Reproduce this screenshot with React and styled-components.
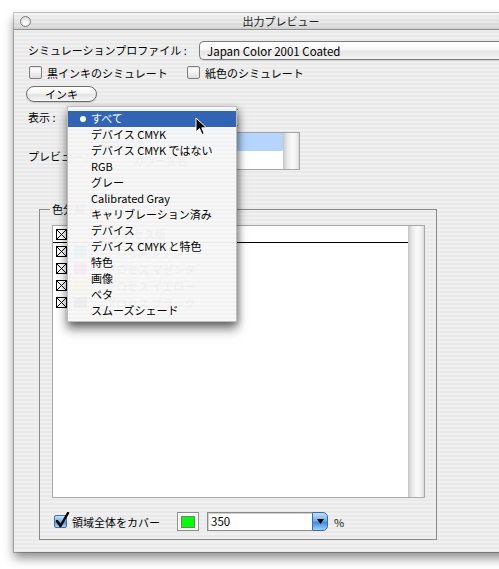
import React from 'react';
import styled, { createGlobalStyle } from 'styled-components';

const FONT = `"Noto Sans CJK JP", "Noto Sans", "Liberation Sans", sans-serif`;

const GlobalStyle = createGlobalStyle`
  html, body {
    margin: 0;
    padding: 0;
    background: #fff;
    overflow: hidden;
  }
  body {
    font-family: ${FONT};
    font-size: 11px;
    color: #000;
  }
  * { box-sizing: border-box; }
`;

const stripes = `repeating-linear-gradient(180deg, #f0f0f0 0px, #f0f0f0 2px, #e9e9e9 2px, #e9e9e9 4px)`;

const Screen = styled.div`
  width: 499px;
  height: 569px;
  overflow: hidden;
  padding: 13px 0 0 14px;
`;

const Window = styled.div`
  position: relative;
  width: 534px;
  height: 539px;
  background: ${stripes};
  box-shadow: 0 0 0 1px rgba(0, 0, 0, 0.22), 0 6px 10px rgba(0, 0, 0, 0.45);
  display: flex;
  flex-direction: column;
`;

const TitleBar = styled.div`
  height: 17px;
  flex: none;
  display: flex;
  align-items: center;
  padding-left: 6px;
  border-bottom: 1px solid #8e8e8e;
  background:
    linear-gradient(180deg, rgba(255,255,255,0.55), rgba(255,255,255,0) 60%, rgba(0,0,0,0.06)),
    repeating-linear-gradient(180deg, #e6e6e6 0px, #e6e6e6 2px, #dedede 2px, #dedede 4px);
`;

const CloseDot = styled.span`
  width: 11px;
  height: 11px;
  border-radius: 50%;
  border: 1px solid #7a7a7a;
  background: radial-gradient(circle at 50% 70%, #ffffff, #e2e2e2 70%, #bdbdbd);
  flex: none;
`;

const Title = styled.div`
  flex: 1;
  text-align: center;
  padding-right: 17px;
  font-size: 11px;
  color: #222;
  line-height: 16px;
`;

const Content = styled.div`
  display: flex;
  flex-direction: column;
  padding: 11px 0 0 14px;
`;

const Row = styled.div`
  display: flex;
  align-items: ${p => p.$align || 'center'};
  height: ${p => p.$h}px;
  margin-top: ${p => p.$mt || 0}px;
  margin-left: ${p => p.$ml || 0}px;
`;

const Label = styled.span`
  width: ${p => (p.$w ? `${p.$w}px` : 'auto')};
  flex: none;
  white-space: nowrap;
  line-height: 17px;
  padding-top: ${p => p.$pt || 0}px;
`;

const PopupField = styled.div`
  flex: none;
  width: ${p => p.$w}px;
  height: ${p => p.$h || 19}px;
  border: 1px solid #7b7b7b;
  border-right: none;
  border-radius: 5px 0 0 5px;
  padding-left: 7px;
  display: flex;
  align-items: center;
  font-size: 11.5px;
  background: linear-gradient(180deg, #ffffff 0%, #f7f7f7 45%, #e6e6e6 55%, #f4f4f4 100%);
  box-shadow: inset 0 1px 0 #fff, 0 1px 1px rgba(0,0,0,0.12);
`;

const CheckItem = styled.label`
  display: flex;
  align-items: center;
  width: ${p => (p.$w ? `${p.$w}px` : 'auto')};
  flex: none;
  gap: 5px;
  white-space: nowrap;
`;

const Box = styled.span`
  width: 13px;
  height: 13px;
  flex: none;
  border: 1px solid #808080;
  border-radius: 2px;
  background: linear-gradient(180deg, #ffffff 0%, #f1f1f1 50%, #dedede 100%);
  box-shadow: inset 0 1px 1px rgba(0,0,0,0.12);
`;

const CheckedBox = styled.span`
  position: relative;
  width: 13px;
  height: 13px;
  flex: none;
  border: 1px solid #4c6d92;
  border-radius: 2px;
  background: linear-gradient(180deg, #c7e3fb 0%, #79b6ef 45%, #4b92dc 55%, #a7d3fa 100%);
  svg {
    position: absolute;
    left: 0;
    top: -4px;
  }
`;

const PillButton = styled.div`
  width: 71px;
  height: 16px;
  border: 1px solid #6e6e6e;
  border-radius: 8px;
  display: flex;
  align-items: center;
  justify-content: center;
  line-height: 14px;
  background: linear-gradient(180deg, #ffffff 0%, #f5f5f5 45%, #e3e3e3 55%, #f7f7f7 100%);
  box-shadow: 0 1px 1px rgba(0,0,0,0.15);
`;

const SmallList = styled.div`
  width: ${p => p.$w}px;
  height: 38px;
  flex: none;
  display: flex;
  border: 1px solid #a4a4a4;
  background: #fff;
`;

const ListRows = styled.div`
  flex: 1;
  display: flex;
  flex-direction: column;
`;

const SmallRow = styled.div`
  height: 18px;
  line-height: 18px;
  padding-left: ${p => p.$pl || 4}px;
  background: ${p => (p.$selected ? '#b5d5ff' : '#fff')};
  white-space: nowrap;
`;

const Track = styled.div`
  width: 16px;
  flex: none;
  border-left: 1px solid #c8c8c8;
  background: linear-gradient(90deg, #cfcfcf 0%, #ececec 25%, #fbfbfb 55%, #f2f2f2 80%, #dadada 100%);
`;

const Group = styled.fieldset`
  margin: 31px 0 0 11px;
  width: 398px;
  height: 339px;
  border: 1px solid #8a8a8a;
  padding: 8px 11px 0 12px;
  display: flex;
  flex-direction: column;
`;

const Legend = styled.legend`
  margin-left: -2px;
  padding: 0 2px;
  line-height: 16px;
`;

const BigList = styled.div`
  height: 273px;
  flex: none;
  display: flex;
  border: 1px solid #a8a8a8;
  background: #fff;
`;

const SepRow = styled.div`
  height: 17px;
  display: flex;
  align-items: center;
  padding-left: 3px;
  border-bottom: ${p => (p.$sep ? '1px solid #000' : 'none')};
  white-space: nowrap;
`;

const Swatch = styled.span`
  width: 13px;
  height: 11px;
  flex: none;
  margin-left: 7px;
  background: ${p => p.$c || 'transparent'};
`;

const RowText = styled.span`
  margin-left: ${p => p.$ml || 7}px;
`;

const BottomRow = styled.div`
  display: flex;
  align-items: center;
  height: 19px;
  margin-top: 14px;
  padding-left: 2px;
`;

const ColorWell = styled.span`
  width: 22px;
  height: 19px;
  flex: none;
  margin-left: 17px;
  border: 1px solid #8f8f8f;
  background: #f4f4f4;
  display: flex;
  align-items: center;
  justify-content: center;
  box-shadow: inset 0 0 0 1px #fff;
`;

const WellColor = styled.span`
  width: 14px;
  height: 12px;
  background: #00ff00;
  border: 1px solid #7a7a7a;
`;

const TextField = styled.span`
  width: 105px;
  height: 19px;
  flex: none;
  margin-left: 8px;
  border: 1px solid #8a8a8a;
  border-right: none;
  background: #fff;
  box-shadow: inset 1px 1px 0 #d0d0d0;
  padding-left: 3px;
  line-height: 17px;
  font-size: 11.5px;
`;

const ArrowButton = styled.span`
  width: 16px;
  height: 19px;
  flex: none;
  border: 1px solid #3f6a9c;
  border-radius: 0 5px 5px 0;
  background: linear-gradient(180deg, #bfe0fb 0%, #6fb0ee 45%, #3f8ae0 55%, #9ed0fb 100%);
  display: flex;
  align-items: center;
  justify-content: center;
`;

const Percent = styled.span`
  margin-left: 6px;
  color: #222;
`;

const Menu = styled.div`
  position: absolute;
  left: 53px;
  top: 93px;
  width: 170px;
  height: 216px;
  padding-top: 4px;
  background: repeating-linear-gradient(180deg, rgba(248,248,248,0.965) 0px, rgba(248,248,248,0.965) 2px, rgba(242,242,242,0.965) 2px, rgba(242,242,242,0.965) 4px);
  border: 1px solid rgba(150,150,150,0.6);
  box-shadow: 0 7px 10px rgba(0, 0, 0, 0.5), 2px 2px 6px rgba(0,0,0,0.25);
`;

const MenuItem = styled.div`
  position: relative;
  height: 16px;
  line-height: 15px;
  padding-left: 23px;
  white-space: nowrap;
  color: ${p => (p.$active ? '#fff' : '#000')};
  background: ${p => (p.$active ? '#3264b4' : 'transparent')};
  font-size: 11px;
`;

const Bullet = styled.span`
  position: absolute;
  left: 12px;
  top: 5px;
  width: 6px;
  height: 6px;
  border-radius: 50%;
  background: #fff;
`;

const Cursor = styled.svg`
  position: absolute;
  left: 181px;
  top: 104px;
`;

const XBox = () => (
  <svg width="11" height="11" viewBox="0 0 11 11" style={{ flex: 'none' }}>
    <rect x="0.5" y="0.5" width="10" height="10" fill="#fff" stroke="#000" />
    <path d="M1 1 L10 10 M10 1 L1 10" stroke="#000" strokeWidth="1" />
  </svg>
);

const MENU_ITEMS = [
  'すべて',
  'デバイス CMYK',
  'デバイス CMYK ではない',
  'RGB',
  'グレー',
  'Calibrated Gray',
  'キャリブレーション済み',
  'デバイス',
  'デバイス CMYK と特色',
  '特色',
  '画像',
  'ベタ',
  'スムーズシェード'
];

const PLATES = [
  { name: 'プロセス シアン', color: '#00aeef' },
  { name: 'プロセス マゼンタ', color: '#ec008c' },
  { name: 'プロセス イエロー', color: '#fff200' },
  { name: 'プロセス ブラック', color: '#231f20' }
];

export default function App() {
  return (
    <>
      <GlobalStyle />
      <Screen>
        <Window>
          <TitleBar>
            <CloseDot />
            <Title>出力プレビュー</Title>
          </TitleBar>
          <Content>
            <Row $h={19}>
              <Label $w={171}>シミュレーションプロファイル :</Label>
              <PopupField $w={340}>Japan Color 2001 Coated</PopupField>
            </Row>
            <Row $h={13} $mt={6} $ml={1}>
              <CheckItem $w={158}>
                <Box />
                黒インキのシミュレート
              </CheckItem>
              <CheckItem>
                <Box />
                紙色のシミュレート
              </CheckItem>
            </Row>
            <Row $h={16} $mt={7} $ml={-2}>
              <PillButton>インキ</PillButton>
            </Row>
            <Row $h={17} $mt={7}>
              <Label $w={40}>表示 :</Label>
              <PopupField $w={170} $h={17}>すべて</PopupField>
            </Row>
            <Row $h={38} $mt={6} $align="flex-start">
              <Label $w={68} $pt={16}>プレビュー :</Label>
              <SmallList $w={204}>
                <ListRows>
                  <SmallRow $selected $pl={4}>総インキ</SmallRow>
                  <SmallRow $pl={36}>カラー警告</SmallRow>
                </ListRows>
                <Track />
              </SmallList>
            </Row>
            <Group>
              <Legend>色分解</Legend>
              <BigList>
                <ListRows>
                  <SepRow $sep>
                    <XBox />
                    <RowText $ml={44}>プロセス版</RowText>
                  </SepRow>
                  {PLATES.map(p => (
                    <SepRow key={p.name}>
                      <XBox />
                      <Swatch $c={p.color} />
                      <RowText $ml={18}>{p.name}</RowText>
                    </SepRow>
                  ))}
                </ListRows>
                <Track />
              </BigList>
              <BottomRow>
                <CheckItem>
                  <CheckedBox>
                    <svg width="15" height="17" viewBox="0 0 15 17">
                      <path d="M2 9 L5.5 14 L13 1" fill="none" stroke="#000" strokeWidth="2.4" strokeLinecap="round" strokeLinejoin="round" />
                    </svg>
                  </CheckedBox>
                  領域全体をカバー
                </CheckItem>
                <ColorWell>
                  <WellColor />
                </ColorWell>
                <TextField>350</TextField>
                <ArrowButton>
                  <svg width="7" height="5" viewBox="0 0 7 5">
                    <path d="M0 0 H7 L3.5 5 Z" fill="#000" />
                  </svg>
                </ArrowButton>
                <Percent>%</Percent>
              </BottomRow>
            </Group>
          </Content>

          <Menu>
            {MENU_ITEMS.map((item, i) => (
              <MenuItem key={item} $active={i === 0}>
                {i === 0 && <Bullet />}
                {item}
              </MenuItem>
            ))}
          </Menu>

          <Cursor width="13" height="20" viewBox="0 0 13 20">
            <path d="M1 1 L1 15 L4.5 11.5 L7 17.5 L9.2 16.6 L6.8 10.8 L11.5 10.8 Z" fill="#000" stroke="#fff" strokeWidth="1" strokeLinejoin="round" />
          </Cursor>
        </Window>
      </Screen>
    </>
  );
}
